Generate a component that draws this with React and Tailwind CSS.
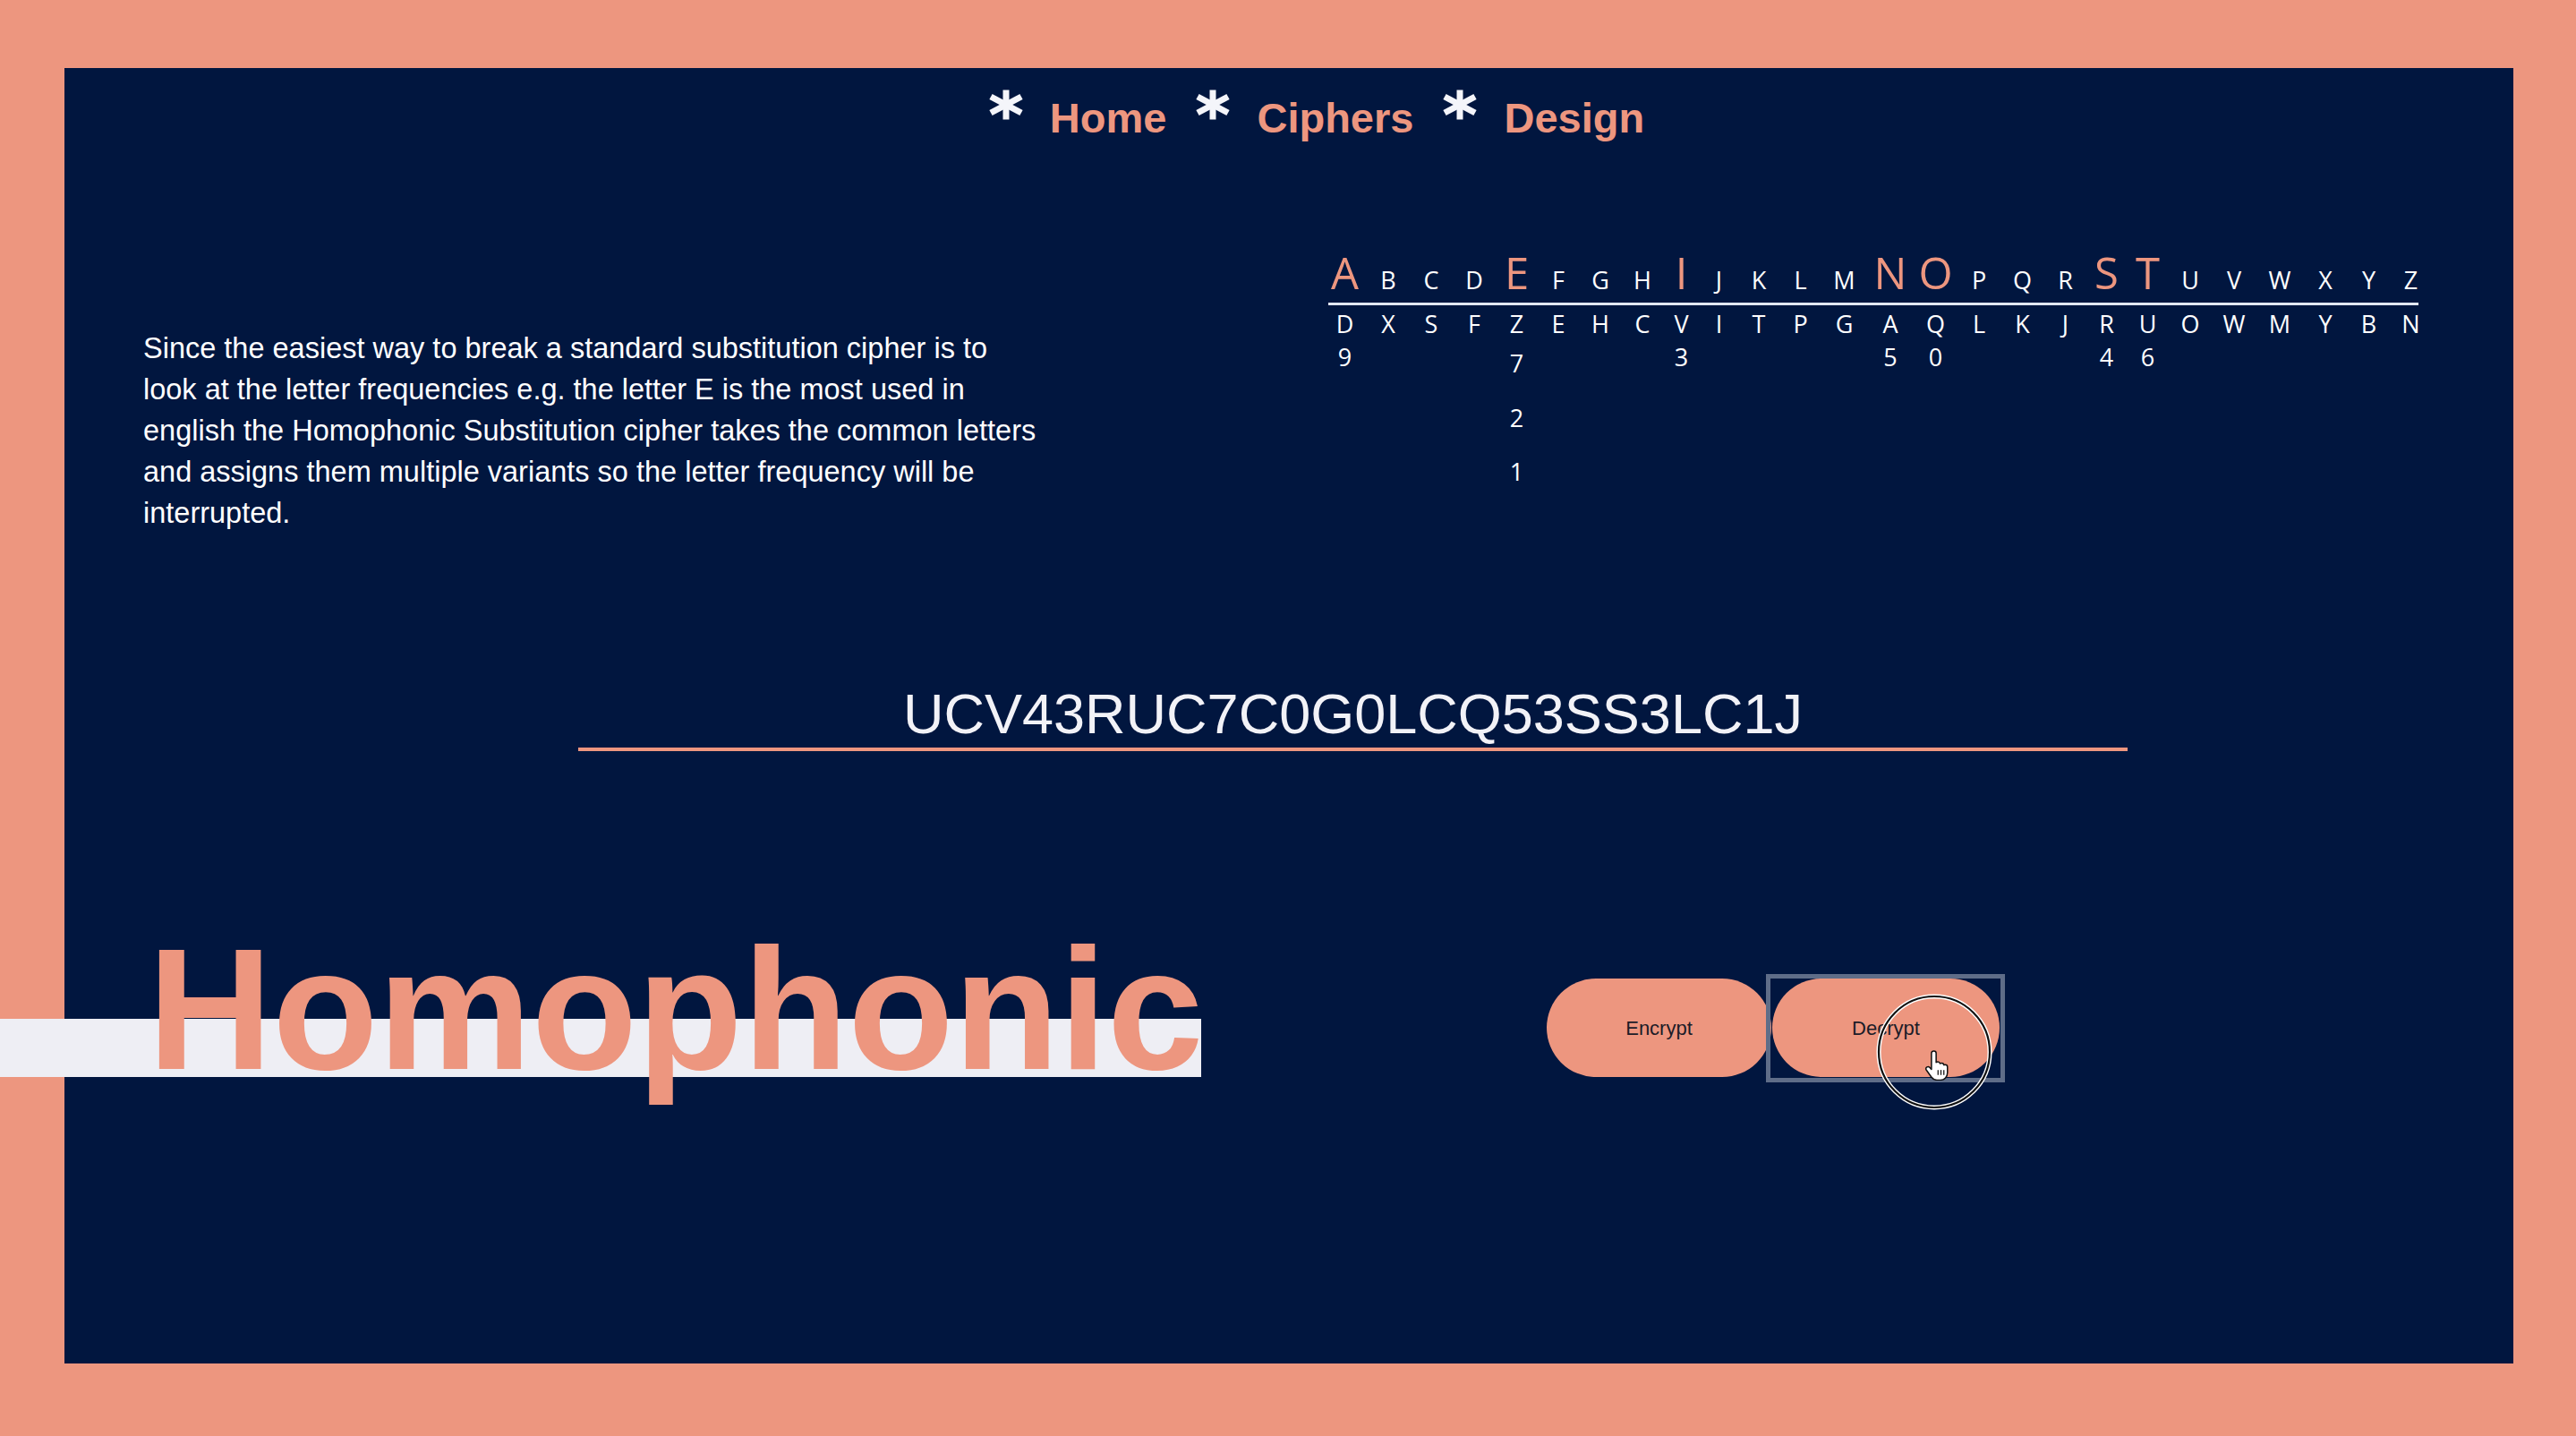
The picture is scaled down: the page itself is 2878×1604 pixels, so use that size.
import React from 'react';

// top letter, highlighted?, substitute, extra homophones
const COLUMNS = [
  ['A', true, 'D', ['9']],
  ['B', false, 'X'],
  ['C', false, 'S'],
  ['D', false, 'F'],
  ['E', true, 'Z', ['7', '2', '1']],
  ['F', false, 'E'],
  ['G', false, 'H'],
  ['H', false, 'C'],
  ['I', true, 'V', ['3']],
  ['J', false, 'I'],
  ['K', false, 'T'],
  ['L', false, 'P'],
  ['M', false, 'G'],
  ['N', true, 'A', ['5']],
  ['O', true, 'Q', ['0']],
  ['P', false, 'L'],
  ['Q', false, 'K'],
  ['R', false, 'J'],
  ['S', true, 'R', ['4']],
  ['T', true, 'U', ['6']],
  ['U', false, 'O'],
  ['V', false, 'W'],
  ['W', false, 'M'],
  ['X', false, 'Y'],
  ['Y', false, 'B'],
  ['Z', false, 'N'],
];

const Asterisk = () => (
  <svg width="40" height="34" viewBox="-20 -17 40 34" className="shrink-0">
    <g stroke="#f4f5fa" strokeWidth="7">
      <line x1="0" y1="-16.5" x2="0" y2="16.5" />
      <line x1="-17" y1="-9" x2="17" y2="9" />
      <line x1="-17" y1="9" x2="17" y2="-9" />
    </g>
  </svg>
);

const NavItem = ({ label }) => (
  <div className="flex items-start gap-[29px]">
    <Asterisk />
    <a href="#" className="mt-[8px] text-[47px] leading-none font-bold text-[#ed967f]">
      {label}
    </a>
  </div>
);

const KeyTable = () => (
  <div className="grid shrink-0 items-start grid-cols-[49px_48px_48px_48px_47px_46px_48px_46px_41px_43px_46px_47px_51px_52px_49px_48px_49px_47px_45px_47px_48px_50px_52px_50px_47px_47px] font-['Open_Sans',sans-serif] text-white">
    {COLUMNS.map(([letter, big]) => (
      <div
        key={'t' + letter}
        className={
          big
            ? 'self-baseline text-center text-[49px] leading-none text-[#ed967f]'
            : 'self-baseline text-center text-[27px] leading-none'
        }
      >
        {letter}
      </div>
    ))}

    <div className="col-span-full mt-[9px] ml-[6px] mr-[15px] h-[3px] bg-[#e2e7f2]" />

    {COLUMNS.map(([letter, , sub]) => (
      <div key={'b' + letter} className="pt-[7px] text-center text-[27px] leading-none">
        {sub}
      </div>
    ))}

    {COLUMNS.map(([letter, , , extra]) => (
      <div key={'d' + letter} className="flex flex-col items-center pt-[9.5px] text-[27px] leading-none">
        {extra && extra.length === 1 && <span>{extra[0]}</span>}
        {extra && extra.length === 3 && (
          <>
            <span className="mt-[7px]">{extra[0]}</span>
            <span className="mt-[34px]">{extra[1]}</span>
            <span className="mt-[33px]">{extra[2]}</span>
          </>
        )}
      </div>
    ))}
  </div>
);

const HandCursor = () => (
  <svg width="30" height="35" viewBox="0 0 24 28" className="absolute left-[170px] top-[79px]">
    <path
      d="M8.5 1.5c1.1 0 2 .9 2 2v8.2c.4-.3.9-.5 1.5-.5 1 0 1.8.7 2 1.6.4-.3.9-.5 1.5-.5 1 0 1.9.8 2 1.8.3-.2.7-.3 1.1-.3 1.1 0 2 .9 2 2v5.2c0 3.5-2.6 6.5-6.2 6.5h-3.2c-2.2 0-3.8-1-5-2.7l-4.4-6.2c-.6-.9-.4-2.1.5-2.7.8-.5 1.8-.4 2.4.3l1.6 1.8V3.5c0-1.1.9-2 2-2z"
      fill="#fff"
      stroke="#111"
      strokeWidth="1.2"
      strokeLinejoin="round"
    />
    <g stroke="#111" strokeWidth="1">
      <line x1="12.2" y1="18.5" x2="12.2" y2="23" />
      <line x1="14.8" y1="18.5" x2="14.8" y2="23" />
      <line x1="17.4" y1="18.5" x2="17.4" y2="23" />
    </g>
  </svg>
);

const ClickHalo = () => (
  <svg width="132" height="132" viewBox="0 0 132 132" className="absolute left-[115px] top-[16px]">
    <circle cx="66" cy="66" r="62" fill="none" stroke="#ffffff" strokeWidth="5" />
    <circle cx="66" cy="66" r="62" fill="none" stroke="#111" strokeWidth="2.2" />
  </svg>
);

export default function App() {
  return (
    <div className="h-[1604px] w-full bg-[#ed967f] pt-[76px] pl-[72px] pr-[70px] pb-[81px] font-['Liberation_Sans',Arial,sans-serif]">
      <div className="flex h-full flex-col bg-[#01163f]">
        {/* Nav */}
        <nav className="flex items-start justify-center gap-[32px] pt-[24px] pl-[61px]">
          <NavItem label="Home" />
          <NavItem label="Ciphers" />
          <NavItem label="Design" />
        </nav>

        {/* Explanation + key */}
        <div className="mt-[125px] flex items-start pl-[88px]">
          <p className="mt-[86px] w-[1318px] shrink-0 text-[32.5px] leading-[46px] text-white">
            Since the easiest way to break a standard substitution cipher is to
            <br />
            look at the letter frequencies e.g. the letter E is the most used in
            <br />
            english the Homophonic Substitution cipher takes the common letters
            <br />
            and assigns them multiple variants so the letter frequency will be
            <br />
            interrupted.
          </p>
          <KeyTable />
        </div>

        {/* Cipher text */}
        <div className="mt-[170px] ml-[574px] w-[1731px] border-b-[4px] border-[#ed967f] pb-[6px] text-center text-[63px] leading-none text-[#f2f2f7]">
          UCV43RUC7C0G0LCQ53SS3LC1J
        </div>

        {/* Title + actions */}
        <div className="mt-[192px] flex items-start pl-[93px]">
          <h1 className="relative h-[193px] w-[1192px] shrink-0 whitespace-nowrap text-[193px] leading-none font-bold text-[#ed967f]">
            <span className="absolute left-[-165px] right-[15px] top-[107px] h-[65px] bg-[#eeeef4]" />
            <span className="relative">Homophonic</span>
          </h1>

          <div className="ml-[371px] mt-[62px] flex gap-[1px]">
            <button className="h-[110px] w-[251px] rounded-full bg-[#ed967f] text-[22px] text-[#1c1c28]">
              Encrypt
            </button>
            <button className="relative h-[110px] w-[254px] rounded-full bg-[#ed967f] text-[22px] text-[#1c1c28]">
              Decrypt
              <span className="pointer-events-none absolute -left-[7px] -right-[6px] -top-[5px] -bottom-[6px] border-[5px] border-[#5f6d88]" />
              <ClickHalo />
              <HandCursor />
            </button>
          </div>
        </div>
      </div>
    </div>
  );
}
